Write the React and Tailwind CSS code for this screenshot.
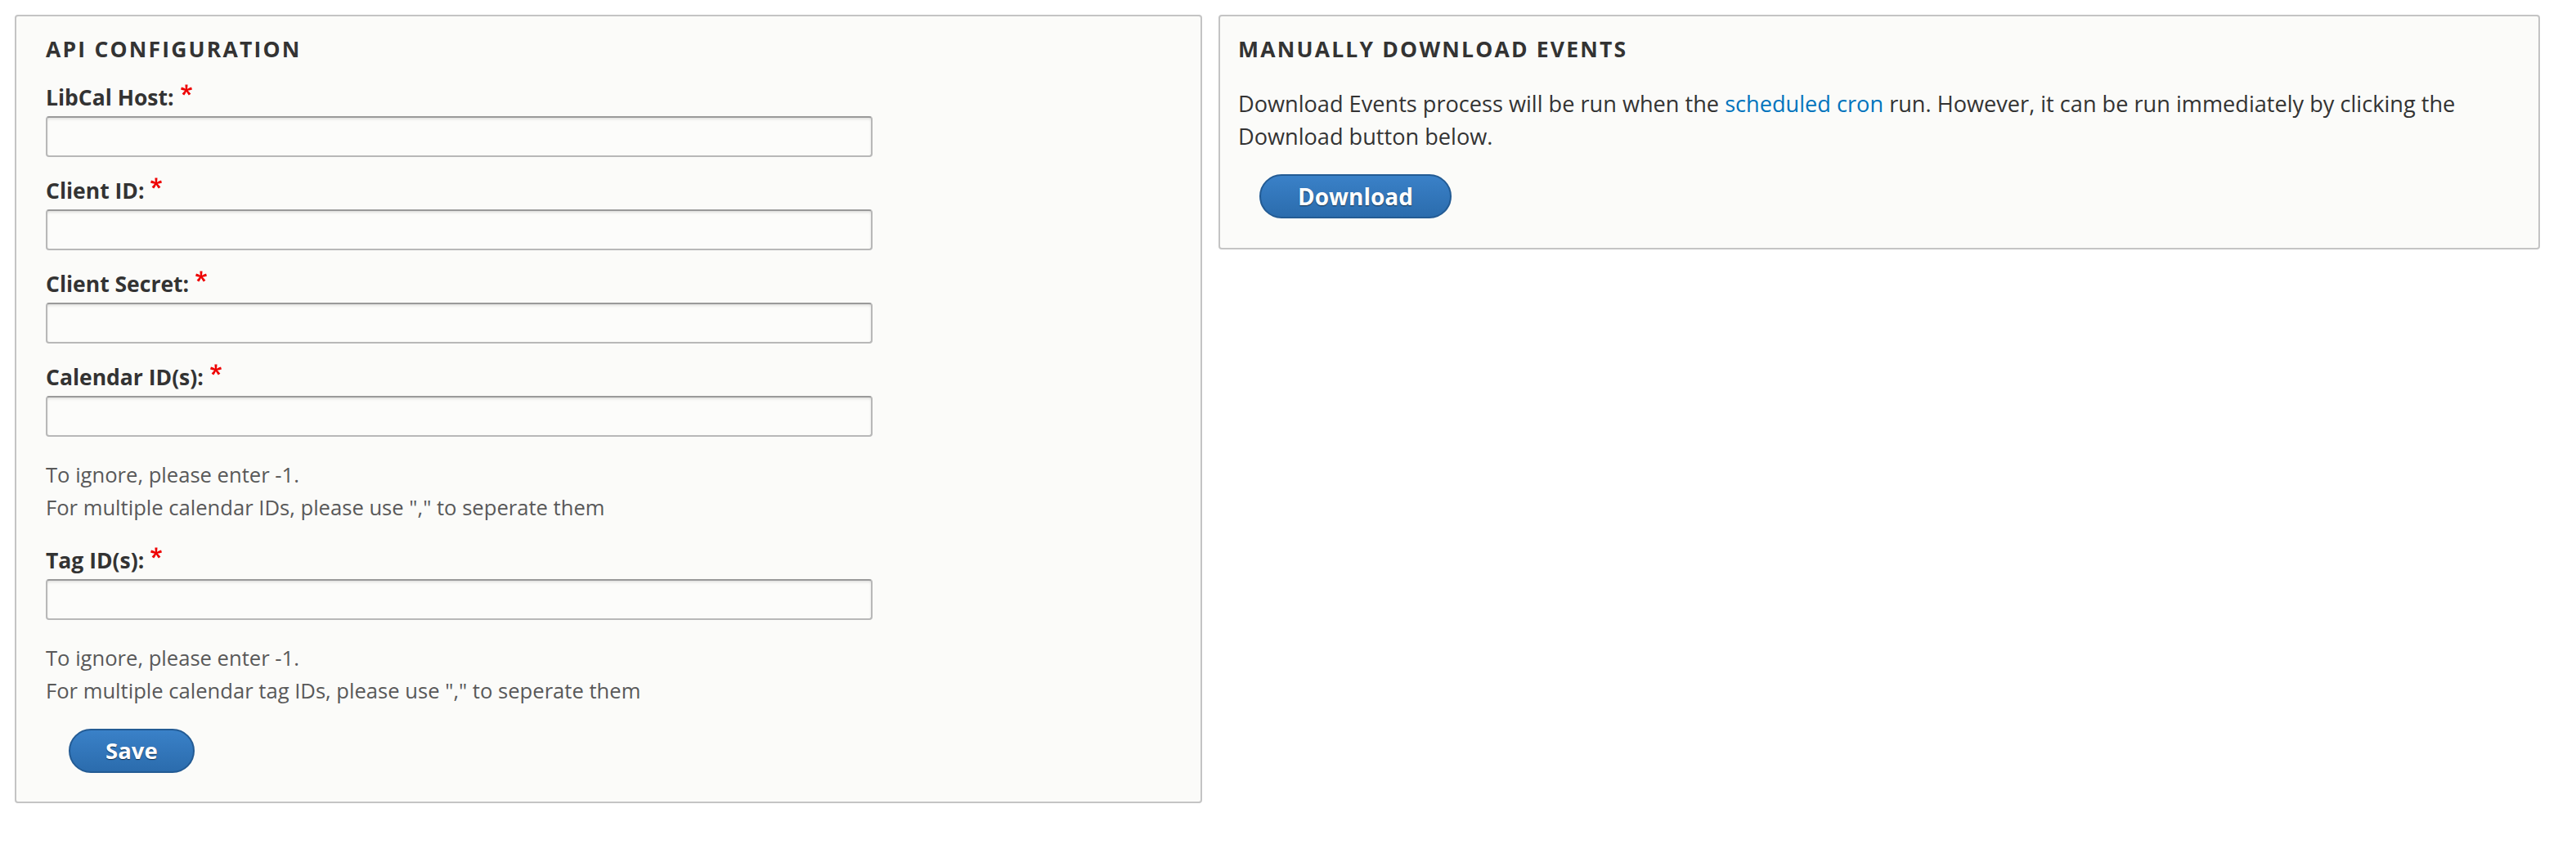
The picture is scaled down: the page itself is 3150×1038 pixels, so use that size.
import React from "react";

function Asterisk() {
  return (
    <svg
      viewBox="0 0 16 16"
      className="inline-block align-top ml-[8px] mt-[4px] w-[14px] h-[14px]"
      aria-hidden="true"
    >
      <path
        fill="#e00"
        d="M0,7.562l1.114-3.438c2.565,0.906,4.43,1.688,5.59,2.35C6.398,3.553,6.237,1.544,6.22,0.447h3.511c-0.05,1.597-0.234,3.6-0.558,6.003c1.664-0.838,3.566-1.613,5.714-2.325L16,7.562c-2.05,0.678-4.06,1.131-6.028,1.357c0.984,0.856,2.372,2.381,4.166,4.575l-2.906,2.059c-0.935-1.274-2.041-3.009-3.316-5.206c-1.194,2.275-2.244,4.013-3.147,5.206l-2.856-2.059c1.872-2.307,3.211-3.832,4.017-4.575C3.849,8.516,1.872,8.062,0,7.562"
      />
    </svg>
  );
}

function Field({ label }) {
  return (
    <div className="flex flex-col">
      <label className="block text-[26.5px] leading-[40px] font-bold text-[#333] mb-[3px]">
        {label}
        <Asterisk />
      </label>
      <input
        type="text"
        className="block w-[1011px] h-[50px] rounded-[4px] border-2 border-[#b8b8b8] border-t-[#9a9a9a] bg-[#fcfcfa] shadow-[inset_0_2px_3px_rgba(0,0,0,0.1)] outline-none"
      />
    </div>
  );
}

function Description({ lines }) {
  return (
    <div className="mt-[27px] text-[25.6px] leading-[40px] text-[#595959]">
      {lines.map((l) => (
        <div key={l}>{l}</div>
      ))}
    </div>
  );
}

function BlueButton({ children, className }) {
  return (
    <button
      type="button"
      className={
        "h-[54px] rounded-full border-2 border-[#235b94] bg-gradient-to-b from-[#3a81c8] to-[#2b6cad] text-white font-bold leading-[50px] [text-shadow:0_1px_1px_rgba(0,0,0,0.6)] " +
        (className || "")
      }
    >
      {children}
    </button>
  );
}

export default function App() {
  return (
    <div className="min-h-[1038px] bg-white pt-[18px] pl-[18px] font-['Open_Sans',sans-serif] text-[#333]">
      <div className="flex items-start gap-[20px]">
        {/* Left panel */}
        <section className="w-[1452px] rounded-[4px] border-2 border-[#c4c4c4] bg-[#fbfbf9] pt-[20px] pl-[36px] pr-[36px] pb-[35px]">
          <h2 className="text-[26.5px] leading-[40px] font-bold uppercase tracking-[2.2px] text-[#333] mb-[19px]">
            API Configuration
          </h2>
          <div className="flex flex-col gap-[21px]">
            <Field label="LibCal Host:" />
            <Field label="Client ID:" />
            <Field label="Client Secret:" />
            <div>
              <Field label="Calendar ID(s):" />
              <Description
                lines={[
                  "To ignore, please enter -1.",
                  'For multiple calendar IDs, please use "," to seperate them',
                ]}
              />
            </div>
          </div>
          <div className="mt-[24px]">
            <Field label="Tag ID(s):" />
            <Description
              lines={[
                "To ignore, please enter -1.",
                'For multiple calendar tag IDs, please use "," to seperate them',
              ]}
            />
          </div>
          <div className="mt-[26px] pl-[28px]">
            <BlueButton className="px-[43px] text-[27.5px]">Save</BlueButton>
          </div>
        </section>

        {/* Right panel */}
        <section className="w-[1616px] rounded-[4px] border-2 border-[#c4c4c4] bg-[#fbfbf9] pt-[20px] pl-[22px] pr-[22px] pb-[36px]">
          <h2 className="text-[26.5px] leading-[40px] font-bold uppercase tracking-[2.2px] text-[#333]">
            Manually Download Events
          </h2>
          <p className="mt-[27px] text-[27.15px] leading-[40px] text-[#333]">
            Download Events process will be run when the{" "}
            <a href="#" className="text-[#0074bd] no-underline">
              scheduled cron
            </a>{" "}
            run. However, it can be run immediately by clicking the Download button below.
          </p>
          <div className="mt-[26px] pl-[26px]">
            <BlueButton className="px-[45px] text-[28px]">Download</BlueButton>
          </div>
        </section>
      </div>
    </div>
  );
}
